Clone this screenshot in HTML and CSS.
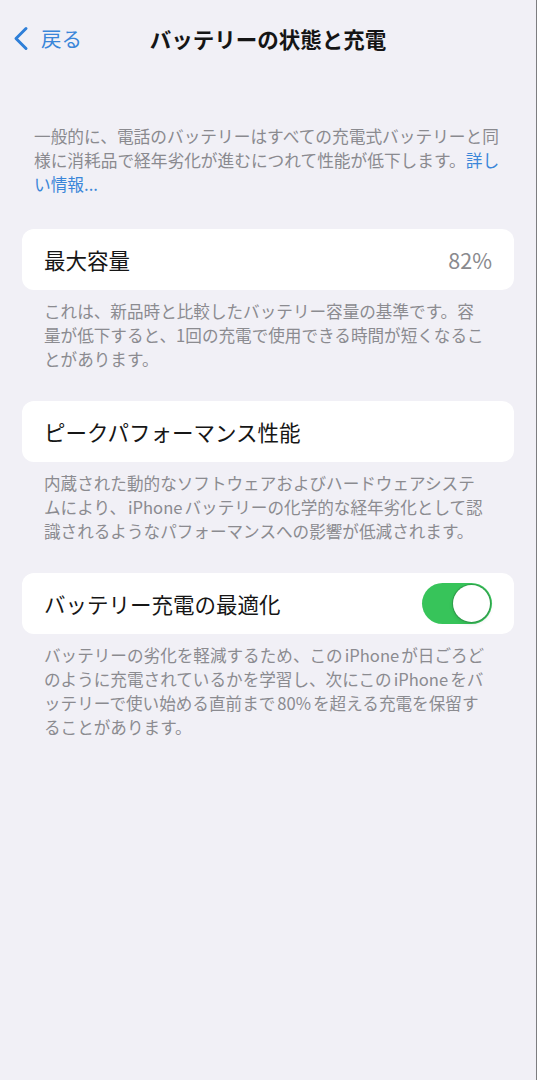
FILE: index.html
```html
<!DOCTYPE html>
<html lang="ja">
<head>
    <meta charset="UTF-8">
    <meta name="viewport" content="width=device-width, initial-scale=1.0">
    <title>バッテリーの状態と充電</title>
    <link rel="stylesheet" href="styles.css">
</head>
<body>
    <div class="screen">
        <div class="nav">
            <a class="back" href="#">
                <svg class="chevron" width="16" height="25" viewBox="0 0 16 25">
                    <path d="M13 2.5 L3 12.5 L13 22.5" fill="none" stroke="#2f7fd8" stroke-width="3" stroke-linecap="round" stroke-linejoin="round"/>
                </svg>
                <span>戻る</span>
            </a>
            <div class="nav-title">バッテリーの状態と充電</div>
            <div></div>
        </div>

        <p class="intro">
            一般的に、電話のバッテリーはすべての充電式バッテリーと同<br>様に消耗品で経年劣化が進むにつれて性能が低下します。<a href="#" class="link">詳し<br>い情報...</a>
        </p>

        <div class="section">
            <div class="card">
                <span class="card-label">最大容量</span>
                <span class="card-value">82%</span>
            </div>
            <p class="footer">
                これは、新品時と比較したバッテリー容量の基準です。容<br>量が低下すると、1回の充電で使用できる時間が短くなるこ<br>とがあります。
            </p>
        </div>

        <div class="section">
            <div class="card">
                <span class="card-label">ピークパフォーマンス性能</span>
            </div>
            <p class="footer">
                内蔵された動的なソフトウェアおよびハードウェアシステ<br>ムにより、<span class="latin">iPhone</span>バッテリーの化学的な経年劣化として認<br>識されるようなパフォーマンスへの影響が低減されます。
            </p>
        </div>

        <div class="section">
            <div class="card">
                <span class="card-label">バッテリー充電の最適化</span>
                <span class="toggle on"><span class="knob"></span></span>
            </div>
            <p class="footer">
                バッテリーの劣化を軽減するため、この<span class="latin">iPhone</span>が日ごろど<br>のように充電されているかを学習し、次にこの<span class="latin">iPhone</span>をバ<br>ッテリーで使い始める直前まで<span class="latin">80%</span>を超える充電を保留す<br>ることがあります。
            </p>
        </div>
    </div>
</body>
</html>
```

FILE: styles.css
```css
body {
    margin: 0;
    font-family: "Noto Sans CJK JP", "Noto Sans", sans-serif;
    background: #f1f0f6;
}

.screen {
    min-height: 1080px;
    box-sizing: border-box;
    border-right: 1px solid #7d7d80;
    background: #f1f0f6;
}

.nav {
    height: 76px;
    display: grid;
    grid-template-columns: 1fr auto 1fr;
    align-items: center;
}

.back {
    display: flex;
    align-items: center;
    gap: 12px;
    padding-left: 13px;
    color: #3a86d9;
    text-decoration: none;
    font-size: 20.5px;
}

.nav-title {
    font-size: 21.5px;
    font-weight: 700;
    color: #151515;
}

.intro {
    margin: 0;
    padding: 48px 0 0 34px;
    font-size: 16.7px;
    line-height: 24px;
    color: #8a8a8f;
    white-space: nowrap;
}

.link {
    color: #3a86d9;
    text-decoration: none;
}

.section {
    margin-top: 33px;
}

.section + .section {
    margin-top: 30px;
}

.card {
    margin: 0 22px;
    height: 61px;
    padding: 0 22px;
    box-sizing: border-box;
    background: #fff;
    border-radius: 12px;
    display: flex;
    align-items: center;
    justify-content: space-between;
}

.card-label {
    font-size: 21.5px;
    color: #161616;
}

.card-value {
    font-size: 21.5px;
    color: #8a8a8e;
}

.footer {
    margin: 0;
    padding: 9px 22px 0 44px;
    font-size: 16.6px;
    line-height: 24px;
    color: #8b8b90;
    white-space: nowrap;
}

/* a little air between kana and Latin words */
.latin {
    margin: 0 2px;
}

.toggle {
    width: 70px;
    height: 41px;
    border-radius: 21px;
    background: #e6e6ea;
    display: flex;
    align-items: center;
    padding: 2px;
    box-sizing: border-box;
}

.toggle.on {
    background: #37c45a;
    justify-content: flex-end;
}

.knob {
    width: 37px;
    height: 37px;
    border-radius: 50%;
    background: #fff;
    box-shadow: 0 0 0 1px rgba(40, 120, 60, 0.45), 0 2px 4px rgba(0, 0, 0, 0.12);
}
```
